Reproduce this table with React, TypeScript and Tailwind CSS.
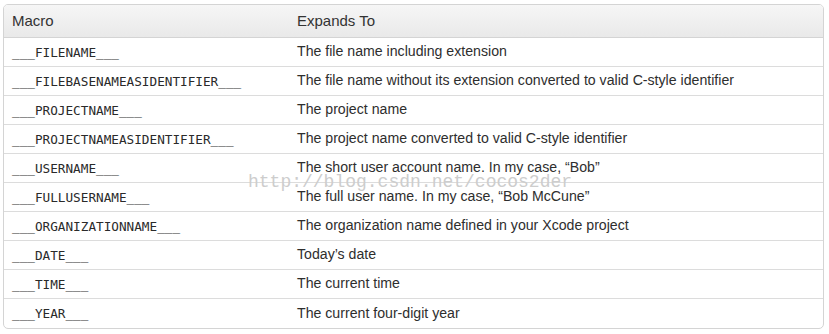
import React from "react";

// Xcode template macros table
const ROWS: [string, string][] = [
  ["___FILENAME___", "The file name including extension"],
  ["___FILEBASENAMEASIDENTIFIER___", "The file name without its extension converted to valid C-style identifier"],
  ["___PROJECTNAME___", "The project name"],
  ["___PROJECTNAMEASIDENTIFIER___", "The project name converted to valid C-style identifier"],
  ["___USERNAME___", "The short user account name. In my case, \u201cBob\u201d"],
  ["___FULLUSERNAME___", "The full user name. In my case, \u201cBob McCune\u201d"],
  ["___ORGANIZATIONNAME___", "The organization name defined in your Xcode project"],
  ["___DATE___", "Today\u2019s date"],
  ["___TIME___", "The current time"],
  ["___YEAR___", "The current four-digit year"],
];

export default function App(): React.ReactElement {
  return (
    <div className="w-[829px] h-[334px] bg-white pl-[3px] pt-[4px] font-['Liberation_Sans',Arial,sans-serif]">
      <div className="relative w-[821px] border border-[#d4d4d4] rounded-[5px] overflow-hidden">
        {/* header */}
        <div className="flex h-[33px] items-center bg-gradient-to-b from-[#f6f6f6] to-[#e9e9e9] border-b border-[#d4d4d4] text-[15px] text-[#333]">
          <div className="w-[284px] pl-[8px]">Macro</div>
          <div className="pl-[9px]">Expands To</div>
        </div>

        {ROWS.map(([macro, desc], i) => (
          <div
            key={macro}
            className={`flex h-[29px] items-center ${i < ROWS.length - 1 ? "border-b border-[#dcdcdc]" : ""}`}
          >
            <div className="w-[284px] pl-[8px] pt-[1px] text-[12.7px] text-[#2a2a2a] font-['DejaVu_Sans_Mono',monospace]">
              {macro}
            </div>
            <div className="pl-[9px] text-[14.15px] text-[#2e2e2e]">{desc}</div>
          </div>
        ))}

        {/* watermark */}
        <div className="absolute left-[244px] top-[164px] text-[18px] text-[#cdcdcd] font-['Liberation_Mono',monospace] pointer-events-none">
          http://blog.csdn.net/cocos2der
        </div>
      </div>
    </div>
  );
}
